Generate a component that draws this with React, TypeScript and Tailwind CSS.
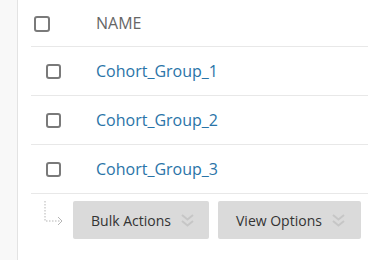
const groups = ['Cohort_Group_1', 'Cohort_Group_2', 'Cohort_Group_3'];

function Box({ small }: { small?: boolean }) {
  return (
    <span
      className={`block rounded-[3px] border-2 border-[#7a7a7a] bg-white ${
        small ? 'w-[15px] h-[15px]' : 'w-[16px] h-[16px]'
      }`}
    />
  );
}

function Chevrons() {
  return (
    <svg width="13" height="14" viewBox="0 0 13 14" fill="none" stroke="#c6c6c6" strokeWidth="2">
      <path d="M1 2l5.5 4.5 5.5-4.5" />
      <path d="M1 8l5.5 4.5 5.5-4.5" />
    </svg>
  );
}

export default function App() {
  return (
    <div className="flex w-[368px] h-[260px] bg-white font-['Open_Sans',sans-serif] overflow-hidden">
      <div className="w-[18px] shrink-0 bg-[#f8f8f8] border-r border-[#e3e3e3]" />
      <div className="flex-1 pl-[13px]">
        {/* Header */}
        <div className="h-[47px] flex items-center border-b border-[#e8e8e8]">
          <div className="w-[65px] pl-[3px] pt-[1px]">
            <Box />
          </div>
          <span className="text-[16px] text-[#666]">NAME</span>
        </div>
        {/* Rows */}
        {groups.map((g) => (
          <div key={g} className="h-[49px] flex items-center border-b border-[#e8e8e8]">
            <div className="w-[65px] pl-[15px]">
              <Box small />
            </div>
            <span className="text-[16px] text-[#2a74a8]">{g}</span>
          </div>
        ))}
        {/* Footer actions */}
        <div className="flex items-start pt-[7px]">
          <div className="w-[42px] pl-[13px]">
            <svg width="22" height="26" viewBox="0 0 22 26" fill="none">
              <path d="M1 0v20h17" stroke="#b5b5b5" strokeDasharray="1.5 1.5" />
              <path d="M14 16l4 4-4 4" stroke="#b5b5b5" />
            </svg>
          </div>
          <button className="h-[38px] w-[136px] rounded-[2px] bg-[#dadada] flex items-center pl-[18px] gap-[10px] text-[14px] text-[#333]">
            Bulk Actions
            <Chevrons />
          </button>
          <button className="ml-[9px] h-[38px] w-[143px] rounded-[2px] bg-[#dadada] flex items-center pl-[18px] gap-[10px] text-[14px] text-[#333]">
            View Options
            <Chevrons />
          </button>
        </div>
      </div>
    </div>
  );
}
